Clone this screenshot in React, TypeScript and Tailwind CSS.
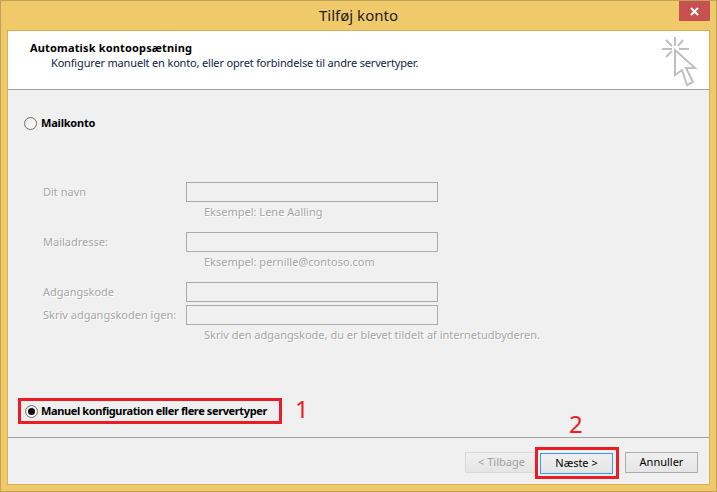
const font = { fontFamily: '"Noto Sans", Tahoma, sans-serif' };

const disabledText = "text-[#a6a6a6] [text-shadow:1px_1px_0_#ffffff]";

const Radio = ({ checked }: { checked?: boolean }) => (
  <span className="flex h-[13px] w-[13px] shrink-0 items-center justify-center rounded-full border border-[#6e6e6e] bg-gradient-to-br from-[#e8e8e8] to-white">
    {checked && <span className="h-[7px] w-[7px] rounded-full bg-[#111]" />}
  </span>
);

const Field = ({ label, hint, className }: { label: string; hint?: string; className?: string }) => (
  <div className={className}>
    <div className="flex h-5 items-center">
      <span className={`w-[143px] whitespace-nowrap ${disabledText}`}>{label}</span>
      <div className="h-5 w-[252px] border border-[#ababab]" />
    </div>
    {hint && <div className={`mt-[3px] ml-[161px] h-[14px] leading-[14px] whitespace-nowrap ${disabledText}`}>{hint}</div>}
  </div>
);

const Button = ({ children, className }: { children: React.ReactNode; className: string }) => (
  <button className={`flex h-[21px] w-[73px] shrink-0 items-center justify-center border bg-gradient-to-b from-[#f0f0f0] to-[#e5e5e5] ${className}`}>
    {children}
  </button>
);

export default function App() {
  return (
    <div className="relative flex h-[492px] w-[717px] flex-col border border-[#c2a254] bg-[#f0c96b] text-[11px] text-black" style={font}>
      {/* titelbjælke */}
      <div className="relative flex h-[29px] shrink-0 items-center justify-center text-[15px] text-[#222]">
        Tilføj konto
        <div className="absolute top-0 right-[6px] flex h-[20px] w-[31px] items-center justify-center bg-[#c75050] text-white">
          <svg width="9" height="9" viewBox="0 0 9 9" fill="none" stroke="white" strokeWidth="2">
            <path d="M1 1l7 7M8 1l-7 7" />
          </svg>
        </div>
      </div>

      <div className="mx-[6px] mb-[6px] flex min-h-0 flex-1 flex-col border border-[#d9ae57] bg-[#f0f0f0]">
        <div className="relative h-[59px] shrink-0 border-b border-[#a0a0a0] bg-white pt-[10px] pl-[22px]">
          <div className="leading-[14px] font-bold tracking-[0.16px]">Automatisk kontoopsætning</div>
          <div className="mt-[1px] ml-[21px] leading-[14px] tracking-[-0.17px] whitespace-nowrap text-[#10253f]">
            Konfigurer manuelt en konto, eller opret forbindelse til andre servertyper.
          </div>
          {/* klik-ikon */}
          <svg className="absolute top-[4px] right-[11px]" width="38" height="52" viewBox="0 0 38 52" fill="none" stroke="#c0c0c0" strokeWidth="2">
            <path d="M15 2v9M2 14h10M19 14h10M6 5l6 6M23 5l-5 6M6 22l6-6" />
            <path d="M15 15v25l7-5 5 15 6-3-7-14h9z" strokeLinejoin="miter" />
          </svg>
        </div>

        <div className="flex min-h-0 flex-1 flex-col">
          <div className="mt-[26px] ml-[16px] flex h-[14px] items-center gap-[4px] font-bold tracking-[-0.2px]">
            <Radio />
            Mailkonto
          </div>
          <div className="mt-[52px] ml-[35px]">
            <Field label="Dit navn" hint="Eksempel: Lene Aalling" />
            <Field className="mt-[13px]" label="Mailadresse:" hint="Eksempel: pernille@contoso.com" />
            <Field className="mt-[13px]" label="Adgangskode" />
            <Field className="mt-[3px]" label="Skriv adgangskoden igen:" hint="Skriv den adgangskode, du er blevet tildelt af internetudbyderen." />
          </div>

          <div className="mt-[56px] ml-[10px] flex h-[26px] w-[264px] items-center gap-[3px] border-[3px] border-[#ed1c24] pl-[4px] font-bold tracking-[-0.38px] whitespace-nowrap">
            <Radio checked />
            Manuel konfiguration eller flere servertyper
          </div>
        </div>

        <div className="relative flex h-[47px] shrink-0 items-start justify-end border-t border-[#a0a0a0] pt-[14px] pr-[11px]">
          <Button className="border-[#d9d9d9] text-[#a0a0a0]">{"< Tilbage"}</Button>
          <div className="relative -ml-[3px] -mt-[5px] flex h-[32px] w-[84px] shrink-0 items-center justify-start border-[3px] border-[#ed1c24] pl-[2px]">
            <Button className="border-[#3399ff]">{"Næste >"}</Button>
          </div>
          <Button className="ml-[6px] border-[#acacac]">Annuller</Button>
        </div>
      </div>

      <span className="absolute top-[394px] left-[294px] text-[24px] leading-[28px] text-[#ed1c24]">1</span>
      <span className="absolute top-[409px] left-[568px] text-[24px] leading-[28px] text-[#ed1c24]">2</span>
    </div>
  );
}
